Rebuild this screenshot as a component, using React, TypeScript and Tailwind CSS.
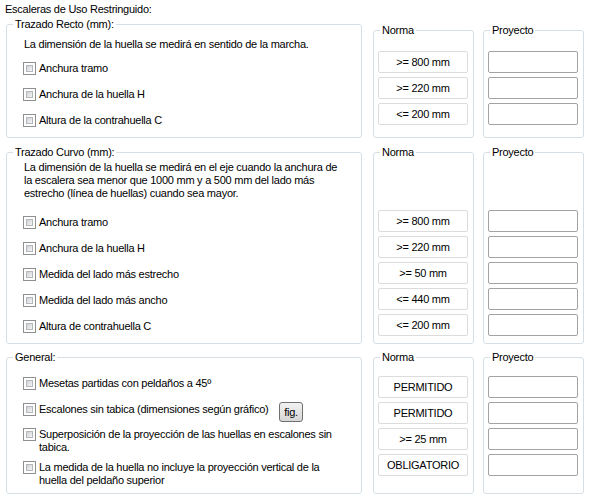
import React from "react";

function Legend({ children }: { children: React.ReactNode }) {
  return <legend className="ml-[6px] px-[2px] leading-[13px]">{children}</legend>;
}

function CheckBox() {
  return (
    <span className="w-[13px] h-[13px] shrink-0 border border-[#8f8f8f] bg-white p-[2px] flex">
      <span className="flex-1 border border-[#b4b7bb] bg-gradient-to-br from-[#cfd2d6] to-[#f4f4f4]" />
    </span>
  );
}

function CheckRow({ label, children }: { label: string; children?: React.ReactNode }) {
  return (
    <div className="h-[26px] flex items-center gap-[3px]">
      <CheckBox />
      <span className="leading-[13px] whitespace-nowrap">{label}</span>
      {children}
    </div>
  );
}

function NormaBox({ text }: { text?: string }) {
  return (
    <div className="w-[90px] h-[22px] border border-[#dcdcdc] rounded-[2px] flex items-center justify-center bg-white">
      {text}
    </div>
  );
}

function ProyectoBox() {
  return <div className="w-[90px] h-[22px] border border-[#a3a3a3] rounded-[2px] bg-white" />;
}

export default function App() {
  const box = "border border-[#d5dfe5] rounded-[3px] shrink-0";
  return (
    <div className="w-[589px] h-[499px] bg-white text-black text-[11px] tracking-[-0.25px] font-['Liberation_Sans',Arial,sans-serif] overflow-hidden">
      <div className="pl-[5px] pt-[3px] leading-[13px]">Escaleras de Uso Restringuido:</div>

      {/* Trazado recto */}
      <div className="flex items-start mt-[2px] ml-[6px]">
        <fieldset className={`${box} w-[356px] h-[120px]`}>
          <Legend>Trazado Recto (mm):</Legend>
          <p className="pl-[17px] pt-[7px] leading-[13px]">La dimensión de la huella se medirá en sentido de la marcha.</p>
          <div className="pl-[16px] pt-[4px]">
            <CheckRow label="Anchura tramo" />
            <CheckRow label="Anchura de la huella H" />
            <CheckRow label="Altura de la contrahuella C" />
          </div>
        </fieldset>
        <fieldset className={`${box} ml-[11px] mt-[6px] w-[101px] h-[114px]`}>
          <Legend>Norma</Legend>
          <div className="pl-[4px] pt-[14px] flex flex-col gap-[4px]">
            <NormaBox text=">= 800 mm" />
            <NormaBox text=">= 220 mm" />
            <NormaBox text="<= 200 mm" />
          </div>
        </fieldset>
        <fieldset className={`${box} ml-[9px] mt-[6px] w-[101px] h-[114px]`}>
          <Legend>Proyecto</Legend>
          <div className="pl-[4px] pt-[14px] flex flex-col gap-[4px]">
            <ProyectoBox />
            <ProyectoBox />
            <ProyectoBox />
          </div>
        </fieldset>
      </div>

      {/* Trazado curvo */}
      <div className="flex items-start mt-[8px] ml-[6px]">
        <fieldset className={`${box} w-[356px] h-[198px]`}>
          <Legend>Trazado Curvo (mm):</Legend>
          <p className="pl-[17px] pt-[2px] leading-[13px] whitespace-nowrap">
            La dimensión de la huella se medirá en el eje cuando la anchura de
            <br />
            la escalera sea menor que 1000 mm y a 500 mm del lado más
            <br />
            estrecho (línea de huellas) cuando sea mayor.
          </p>
          <div className="pl-[16px] pt-[9px]">
            <CheckRow label="Anchura tramo" />
            <CheckRow label="Anchura de la huella H" />
            <CheckRow label="Medida del lado más estrecho" />
            <CheckRow label="Medida del lado más ancho" />
            <CheckRow label="Altura de contrahuella C" />
          </div>
        </fieldset>
        <fieldset className={`${box} ml-[11px] w-[101px] h-[198px]`}>
          <Legend>Norma</Legend>
          <div className="pl-[4px] pt-[51px] flex flex-col gap-[4px]">
            <NormaBox text=">= 800 mm" />
            <NormaBox text=">= 220 mm" />
            <NormaBox text=">= 50 mm" />
            <NormaBox text="<= 440 mm" />
            <NormaBox text="<= 200 mm" />
          </div>
        </fieldset>
        <fieldset className={`${box} ml-[9px] w-[101px] h-[198px]`}>
          <Legend>Proyecto</Legend>
          <div className="pl-[4px] pt-[51px] flex flex-col gap-[4px]">
            <ProyectoBox />
            <ProyectoBox />
            <ProyectoBox />
            <ProyectoBox />
            <ProyectoBox />
          </div>
        </fieldset>
      </div>

      {/* General */}
      <div className="flex items-start mt-[7px] ml-[6px]">
        <fieldset className={`${box} w-[356px] h-[143px]`}>
          <Legend>General:</Legend>
          <div className="pl-[16px] pt-[6px]">
            <CheckRow label="Mesetas partidas con peldaños a 45º" />
            <div className="h-[26px] flex items-center gap-[3px]">
              <CheckBox />
              <span className="leading-[13px] w-[237px] shrink-0 whitespace-nowrap">Escalones sin tabica (dimensiones según gráfico)</span>
              <button className="w-[24px] h-[20px] mt-[6px] border border-[#707070] rounded-[3px] bg-gradient-to-b from-[#f2f2f2] to-[#d6d6d6] leading-[13px] flex items-center justify-center">
                fig.
              </button>
            </div>
            <div className="flex items-start gap-[3px] pt-[6px]">
              <CheckBox />
              <span className="leading-[13px] whitespace-nowrap">
                Superposición de la proyección de las huellas en escalones sin
                <br />
                tabica.
              </span>
            </div>
            <div className="flex items-start gap-[3px] pt-[7px]">
              <CheckBox />
              <span className="leading-[13px] whitespace-nowrap">
                La medida de la huella no incluye la proyección vertical de la
                <br />
                huella del peldaño superior
              </span>
            </div>
          </div>
        </fieldset>
        <fieldset className={`${box} ml-[11px] w-[101px] h-[143px]`}>
          <Legend>Norma</Legend>
          <div className="pl-[4px] pt-[12px] flex flex-col gap-[4px]">
            <NormaBox text="PERMITIDO" />
            <NormaBox text="PERMITIDO" />
            <NormaBox text=">= 25 mm" />
            <NormaBox text="OBLIGATORIO" />
          </div>
        </fieldset>
        <fieldset className={`${box} ml-[9px] w-[101px] h-[143px]`}>
          <Legend>Proyecto</Legend>
          <div className="pl-[4px] pt-[12px] flex flex-col gap-[4px]">
            <ProyectoBox />
            <ProyectoBox />
            <ProyectoBox />
            <ProyectoBox />
          </div>
        </fieldset>
      </div>
    </div>
  );
}
